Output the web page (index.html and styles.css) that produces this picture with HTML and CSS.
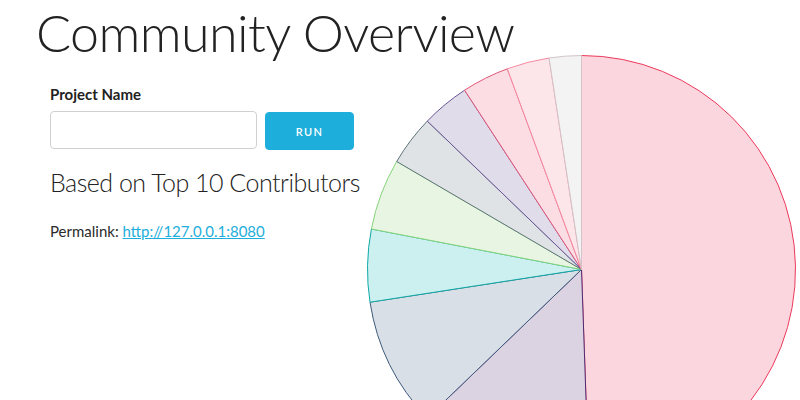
FILE: index.html
```html
<!DOCTYPE html>
<html>
<head>
<meta charset="utf-8">
<link rel="stylesheet" href="styles.css">
</head>
<body>
<main class="page">
  <h1 class="title">Community Overview</h1>
  <section class="controls">
    <label class="label" for="project">Project Name</label>
    <div class="form-row">
      <input id="project" class="input" type="text">
      <button class="button-primary" type="button">RUN</button>
    </div>
    <h5 class="subtitle">Based on Top 10 Contributors</h5>
    <p class="permalink">Permalink: <a href="#">http://127.0.0.1:8080</a></p>
  </section>
  <div class="chart">
    <svg width="440" height="400" viewBox="0 0 440 400">
      <g stroke-width="1" stroke-linejoin="round">
        <path d="M221.5 269.5 L221.5 55.5 A214 214 0 0 1 228.97 483.37 Z" fill="#fbd6de" stroke="#ec3a5c"/>
        <path d="M221.5 269.5 L228.97 483.37 A214 214 0 0 1 67.3 417.9 Z" fill="#dcd3e2" stroke="#512a72"/>
        <path d="M221.5 269.5 L67.3 417.9 A214 214 0 0 1 10.0 302.2 Z" fill="#d8dfe6" stroke="#3e5a7c"/>
        <path d="M221.5 269.5 L10.0 302.2 A214 214 0 0 1 11.4 229.0 Z" fill="#cbf0ef" stroke="#0ea9a6"/>
        <path d="M221.5 269.5 L11.4 229.0 A214 214 0 0 1 36.7 161.5 Z" fill="#e8f5e2" stroke="#86d47a"/>
        <path d="M221.5 269.5 L36.7 161.5 A214 214 0 0 1 67.3 121.1 Z" fill="#dfe3e6" stroke="#5f7478"/>
        <path d="M221.5 269.5 L67.3 121.1 A214 214 0 0 1 104.6 90.2 Z" fill="#e1dcea" stroke="#6a5597"/>
        <path d="M221.5 269.5 L104.6 90.2 A214 214 0 0 1 147.3 68.8 Z" fill="#fcdde3" stroke="#e2577a"/>
        <path d="M221.5 269.5 L147.3 68.8 A214 214 0 0 1 189.1 58.0 Z" fill="#fde6ea" stroke="#f58ba0"/>
        <path d="M221.5 269.5 L189.1 58.0 A214 214 0 0 1 221.5 55.5 Z" fill="#f3f3f3" stroke="#d2c4c8"/>
      </g>
    </svg>
  </div>
</main>
</body>
</html>
```

FILE: styles.css
```css
html, body {
  margin: 0;
  padding: 0;
  background: #fff;
}
body {
  font-family: Lato, "Open Sans", "Liberation Sans", sans-serif;
  color: #222;
  font-size: 15px;
  overflow: hidden;
  height: 400px;
}
.page {
  display: grid;
  grid-template-columns: 360px 440px;
  grid-template-rows: 80px auto;
}
.title {
  grid-column: 1;
  grid-row: 1;
  margin: 0;
  padding: 0 0 0 36px;
  font-weight: 300;
  font-size: 52px;
  line-height: 64px;
  letter-spacing: -0.6px;
  white-space: nowrap;
  color: #222;
}
.controls {
  grid-column: 1;
  grid-row: 2;
  padding: 4px 0 0 50px;
  display: flex;
  flex-direction: column;
}
.label {
  font-weight: 700;
  font-size: 15px;
  line-height: 20px;
  margin-bottom: 7px;
  color: #222;
}
.form-row {
  display: flex;
  gap: 8px;
  align-items: flex-start;
}
.input {
  box-sizing: border-box;
  width: 207px;
  height: 38px;
  border: 1px solid #d1d1d1;
  border-radius: 4px;
  margin: 0;
  padding: 6px 10px;
  background: #fff;
}
.button-primary {
  box-sizing: border-box;
  width: 89px;
  height: 38px;
  margin: 1px 0 0;
  border: 1px solid #1eaedb;
  border-radius: 4px;
  background: #1eaedb;
  color: #fff;
  font-family: inherit;
  font-size: 11px;
  font-weight: 600;
  letter-spacing: 1.3px;
}
.subtitle {
  margin: 16px 0 0;
  font-size: 25px;
  font-weight: 300;
  line-height: 32px;
  letter-spacing: -0.5px;
  color: #222;
}
.permalink {
  margin: 22px 0 0;
  font-size: 15px;
  line-height: 22px;
  color: #2a2a2a;
}
.permalink a {
  color: #1eaedb;
}
.chart {
  grid-column: 2;
  grid-row: 1 / span 2;
  height: 400px;
}
.chart svg {
  display: block;
}
```
